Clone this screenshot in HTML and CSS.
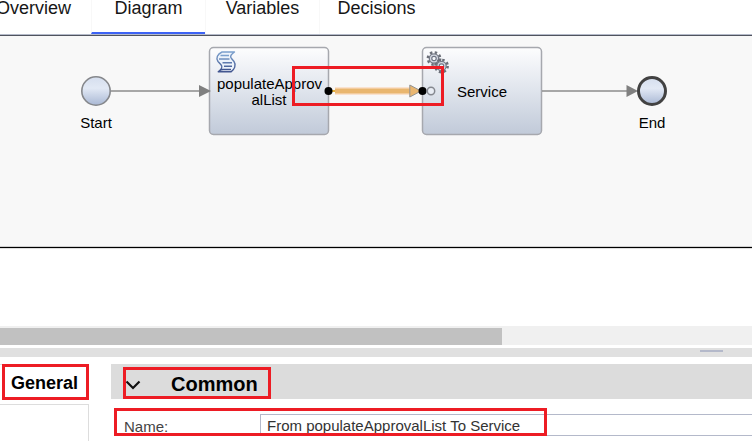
FILE: index.html
```html
<!DOCTYPE html>
<html lang="en">
<head>
<meta charset="utf-8">
<title>Process designer</title>
<link rel="stylesheet" href="styles.css">
</head>
<body>
<nav class="tabs">
  <a class="tab tab-first" href="#overview">Overview</a>
  <a class="tab tab-active" href="#diagram">Diagram</a>
  <a class="tab" href="#variables">Variables</a>
  <a class="tab" href="#decisions">Decisions</a>
</nav>
<main>
  <section class="canvas">
    <svg class="diagram" width="752" height="210" viewBox="0 36 752 210">
      <defs>
        <linearGradient id="task" x1="0" y1="0" x2="0" y2="1">
          <stop offset="0" stop-color="#fdfdfe"/>
          <stop offset=".5" stop-color="#dfe4ec"/>
          <stop offset="1" stop-color="#c1cad9"/>
        </linearGradient>
        <linearGradient id="event" x1="0" y1="0" x2="0" y2="1">
          <stop offset="0" stop-color="#d5deee"/>
          <stop offset=".4" stop-color="#e2e9f5"/>
          <stop offset="1" stop-color="#a9b8d4"/>
        </linearGradient>
        <linearGradient id="ink" x1="0" y1="0" x2="0" y2="1">
          <stop offset="0" stop-color="#7ba0cd"/>
          <stop offset="1" stop-color="#41558f"/>
        </linearGradient>
        <g id="gear">
          <circle r="6.100" fill="none" stroke="#6b6f78" stroke-width="2.600" stroke-dasharray="2.400 2.391"/>
          <circle r="4.700" fill="#d5d9e2" stroke="#757a86" stroke-width="1.300"/>
          <circle r="2.200" fill="#f5f7fa" stroke="#6d7382" stroke-width="1.200"/>
        </g>
      </defs>
      <rect x="209.500" y="47.500" width="119" height="87" rx="4" fill="url(#task)" stroke="#a6a8ae" stroke-width="1.500"/>
      <rect x="422.500" y="47.500" width="119" height="87" rx="4" fill="url(#task)" stroke="#a6a8ae" stroke-width="1.500"/>
      <path d="M111 91H200M542 91H628" stroke="#8c8c8c" stroke-width="1.500"/>
      <path d="M199 85L211 91L199 97ZM626.500 85L638 91L626.500 97Z" fill="#808080"/>
      <circle cx="96" cy="91" r="14.200" fill="url(#event)" stroke="#85878b" stroke-width="1.600"/>
      <circle cx="652" cy="91" r="13.500" fill="url(#event)" stroke="#424242" stroke-width="3"/>
      <g fill="none" stroke="url(#ink)" stroke-width="1.400" stroke-linejoin="round">
        <path d="M222 52H234.500C231 54.500 229.500 56.500 231.500 58.500L234 61.500C236.500 65 234.500 69.500 231 71.800H218.200C221.500 69.500 223 67 221 64.800L218 61.500C215.500 58 217.500 54 222 52Z" fill="#edf3fb"/>
        <path d="M220.500 55.500H229M219 59H229.500M222.500 62.800H232M224 66.300H232M220 70L223 69.500H231"/>
      </g>
      <use href="#gear" x="434" y="58.500"/>
      <use href="#gear" x="441.500" y="66"/>
      <g class="node-label">
        <text x="269.500" y="89">populateApprov</text>
        <text x="269" y="105">alList</text>
        <text x="482" y="97">Service</text>
        <text x="96" y="128">Start</text>
        <text x="652" y="128">End</text>
      </g>
      <path d="M330 91H420" stroke="#e3b03c" stroke-width="2"/>
      <path d="M335 91H412" stroke="#fae2cf" stroke-width="8"/>
      <path d="M335 91H410" stroke="#e9b66f" stroke-width="5"/>
      <path d="M409.800 85L421 91L409.800 97Z" fill="#e9b66f" stroke="#929292"/>
      <circle cx="328.500" cy="91" r="4"/>
      <circle cx="422.500" cy="91" r="4"/>
      <circle cx="431" cy="91" r="3.700" fill="#e9edf4" stroke="#85888f" stroke-width="1.500"/>
    </svg>
    <div class="mark mark-flow"></div>
  </section>
  <div class="blank"></div>
  <div class="scrollbar"><div class="thumb"></div></div>
  <div class="splitter"><div class="grip"></div></div>
  <section class="properties">
    <aside class="side">
      <button class="side-tab" type="button">General</button>
      <div class="side-panel"></div>
    </aside>
    <div class="details">
      <button class="section-head" type="button">
        <span class="mark mark-common"></span>
        <svg class="chevron" width="16" height="10" viewBox="0 0 16 10"><path d="M1.500 1.500L8 8L14.500 1.500" fill="none" stroke="#111" stroke-width="2.200"/></svg>
        <span>Common</span>
      </button>
      <div class="field">
        <label for="name">Name:</label>
        <input id="name" type="text" value="From populateApprovalList To Service">
        <div class="mark mark-name"></div>
      </div>
    </div>
  </section>
</main>
</body>
</html>
```
FILE: styles.css
```css
* { box-sizing: border-box; }

body {
  margin: 0;
  overflow: hidden;
  background: #fff;
  color: #111;
  font-family: "Liberation Sans", Arial, sans-serif;
  font-size: 15px;
}

.tabs {
  display: flex;
  height: 36px;
  border-bottom: 1px solid #50535e;
  box-shadow: inset 0 -1px #b4bac9;
}

.tab {
  width: 114px;
  height: 34px;
  border-left: 1px solid #f8f8f8;
  color: #161616;
  font-size: 18px;
  line-height: 16px;
  text-align: center;
  text-decoration: none;
}

.tab-first {
  width: 91px;
  padding-right: 20px;
  border-left: 0;
  direction: rtl;
  white-space: nowrap;
}

.tab-active { border-bottom: 2px solid #3d63f5; }

.canvas {
  position: relative;
  height: 211px;
  background: #f8f8f8;
  border-bottom: 1px solid #d0d0d0;
}

.diagram { display: block; }

.node-label {
  fill: #000;
  font-size: 15px;
  text-anchor: middle;
}

.mark {
  position: absolute;
  border: 3px solid #ed1c24;
  pointer-events: none;
}

.mark-flow {
  top: 30px;
  left: 292px;
  width: 152px;
  height: 40px;
}

.blank {
  height: 79px;
  border-top: 1px solid #000;
  box-shadow: inset 0 1px #dedede;
}

.scrollbar {
  height: 19px;
  padding-top: 2px;
  background: #f0f0f0;
}

.thumb {
  width: 502px;
  height: 17px;
  background: #c1c1c1;
}

.splitter {
  display: flex;
  justify-content: flex-end;
  height: 9px;
  margin: 3px 0 7px;
  padding: 2px 29px 0 0;
  background: #e0e0e0;
}

.grip {
  width: 23px;
  height: 2px;
  background: #b4b9ca;
}

.properties {
  display: grid;
  grid-template-columns: 89px 1fr;
  column-gap: 22px;
}

.side { border-top: 1px solid #ddd; }

.side-tab {
  display: block;
  width: 87px;
  height: 36px;
  margin: -1px 0 4px 2px;
  padding: 3px 2px 0 0;
  border: 3px solid #ed1c24;
  background: #fff;
  color: #000;
  font: bold 18px "Liberation Sans", Arial, sans-serif;
  text-align: center;
}

.side-panel {
  height: 40px;
  border: 1px solid #ddd;
  border-left: 0;
}

.section-head {
  position: relative;
  display: flex;
  align-items: center;
  gap: 30px;
  width: 100%;
  height: 35px;
  padding: 6px 0 0 14px;
  border: 0;
  background: #dcdcdc;
  color: #000;
  font: bold 20px "Liberation Sans", Arial, sans-serif;
}

.mark-common {
  top: 3px;
  left: 12px;
  width: 148px;
  height: 32px;
}

.field {
  position: relative;
  display: grid;
  grid-template-columns: 136px 1fr;
  margin-top: 15px;
  padding-left: 13px;
  color: #444;
}

.field label { padding-top: 4px; }

.field input {
  width: 100%;
  height: 22px;
  padding: 0 6px;
  border: 1px solid #b4b9ca;
  border-right: 0;
  background: #fff;
  color: #333;
  font: 15px "Liberation Sans", Arial, sans-serif;
}

.mark-name {
  top: -6px;
  left: 3px;
  width: 433px;
  height: 28px;
}
```
